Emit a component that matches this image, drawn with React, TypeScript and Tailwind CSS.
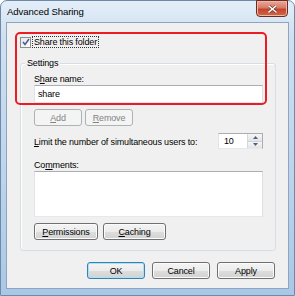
import React from "react";

const font = { fontFamily: '"Liberation Sans", Arial, sans-serif' };

function Btn({
  children,
  w,
  disabled,
  def,
}: {
  children: React.ReactNode;
  w: string;
  disabled?: boolean;
  def?: boolean;
}) {
  if (disabled) {
    return (
      <div
        className={`${w} h-[17px] rounded-[3px] border border-[#adb2b5] bg-[#f4f4f4] flex items-center justify-center text-[#838383]`}
      >
        {children}
      </div>
    );
  }
  return (
    <div
      className={`${w} h-[17px] rounded-[3px] border ${
        def
          ? "border-[#3c7fb1] shadow-[inset_0_0_0_1px_#a6e3f8]"
          : "border-[#707070] shadow-[inset_0_0_0_1px_#fbfbfb]"
      } bg-[linear-gradient(to_bottom,#f4f4f4_0%,#ececec_50%,#dedede_50%,#d2d2d2_100%)] flex items-center justify-center text-black`}
    >
      {children}
    </div>
  );
}

export default function App() {
  return (
    <div
      className="w-[295px] h-[296px] relative rounded-t-[7px] border border-[#6f8aa8] bg-[linear-gradient(to_bottom,#e4eef8_0%,#cfe0f1_12%,#bcd4ec_60%,#a9c8e6_100%)] flex flex-col text-[9px] tracking-[-0.15px] leading-[12px] select-none"
      style={font}
    >
      {/* title bar */}
      <div className="h-[21px] flex items-start justify-between shrink-0">
        <div className="pl-[6px] pt-[5px] text-[9.6px] tracking-[-0.1px] text-black">
          Advanced Sharing
        </div>
        <div className="mr-[6px] -mt-px w-[32px] h-[17px] rounded-b-[4px] border border-[#6d2a20] bg-[linear-gradient(to_bottom,#e9a99b_0%,#d77b66_45%,#c2442c_55%,#cf6a45_100%)] shadow-[inset_0_0_0_1px_#f0b6a8] flex items-center justify-center">
          <svg width="9" height="8" viewBox="0 0 9 8">
            <path
              d="M1 1 L8 7 M8 1 L1 7"
              stroke="#5a1a10"
              strokeWidth="2.6"
              strokeLinecap="square"
            />
            <path
              d="M1 1 L8 7 M8 1 L1 7"
              stroke="#ffffff"
              strokeWidth="1.6"
              strokeLinecap="square"
            />
          </svg>
        </div>
      </div>

      {/* client area */}
      <div className="relative ml-[5px] w-[283px] h-[267px] border border-[#8ea5bd] bg-[#f0f0f0] flex flex-col text-black">
        {/* checkbox row */}
        <div className="mt-[13px] ml-[13px] h-[12px] flex items-center">
          <div className="w-[11px] h-[11px] border border-[#8e8f8f] bg-[linear-gradient(135deg,#e6e6e6,#ffffff)] flex items-center justify-center">
            <svg width="8" height="8" viewBox="0 0 8 8">
              <path
                d="M1 4 L3 6.5 L7 1"
                fill="none"
                stroke="#4a5f97"
                strokeWidth="1.6"
              />
            </svg>
          </div>
          <div className="ml-[1px] h-[12px] px-[1px] border border-dotted border-[#333] flex items-center">
            Share this folder
          </div>
        </div>

        {/* group box */}
        <div className="relative mt-[15px] ml-[13px] w-[256px] rounded-[3px] border border-[#d5dfe5] shadow-[inset_1px_1px_0_#ffffff] pl-[13px] pr-[12px] pt-[9px] pb-[10px] flex flex-col">
          <div className="absolute -top-[7px] left-[4px] px-[2px] bg-[#f0f0f0] h-[12px]">
            Settings
          </div>
          <div className="h-[12px]">
            S<span className="underline">h</span>are name:
          </div>
          <div className="h-[18px] border border-[#abadb3] border-b-[#e3e9ef] border-l-[#e2e3ea] border-r-[#dbdfe6] bg-white pl-[3px] flex items-center">
            share
          </div>
          <div className="mt-[6px] flex gap-[3px]">
            <Btn w="w-[48px]" disabled>
              <span className="underline">A</span>dd
            </Btn>
            <Btn w="w-[48px]" disabled>
              <span className="underline">R</span>emove
            </Btn>
          </div>
          <div className="mt-[7px] h-[16px] flex items-center justify-between">
            <div className="pt-[1px]">
              <span className="underline">L</span>imit the number of simultaneous users to:
            </div>
            <div className="w-[45px] h-[16px] border border-[#abadb3] border-b-[#e3e9ef] border-l-[#e2e3ea] bg-white flex">
              <div className="flex-1 pl-[5px] flex items-center">10</div>
              <div className="w-[15px] flex flex-col border-l border-[#d5d9de]">
                <div className="flex-1 bg-[linear-gradient(to_bottom,#f6f6f6,#e4e4e4)] flex items-center justify-center border-b border-[#cfd3d8]">
                  <svg width="5" height="3" viewBox="0 0 5 3">
                    <path d="M0 3 L2.5 0 L5 3 Z" fill="#4d6185" />
                  </svg>
                </div>
                <div className="flex-1 bg-[linear-gradient(to_bottom,#f6f6f6,#e4e4e4)] flex items-center justify-center">
                  <svg width="5" height="3" viewBox="0 0 5 3">
                    <path d="M0 0 L2.5 3 L5 0 Z" fill="#4d6185" />
                  </svg>
                </div>
              </div>
            </div>
          </div>
          <div className="mt-[10px] h-[12px]">
            Co<span className="underline">m</span>ments:
          </div>
          <div className="h-[46px] border border-[#abadb3] border-b-[#e3e9ef] border-l-[#e2e3ea] border-r-[#dbdfe6] bg-white" />
          <div className="mt-[6px] flex gap-[5px]">
            <Btn w="w-[64px]">
              <span className="underline">P</span>ermissions
            </Btn>
            <Btn w="w-[63px]">
              <span className="underline">C</span>aching
            </Btn>
          </div>
        </div>

        {/* bottom buttons */}
        <div className="mt-[11px] pr-[13px] flex justify-end gap-[7px]">
          <Btn w="w-[58px]" def>
            OK
          </Btn>
          <Btn w="w-[58px]">Cancel</Btn>
          <Btn w="w-[58px]">Apply</Btn>
        </div>

        {/* red highlight overlay */}
        <div className="absolute left-[8px] top-[9px] w-[252px] h-[73px] rounded-[5px] border-2 border-[#ec1c24] pointer-events-none" />
      </div>
    </div>
  );
}
